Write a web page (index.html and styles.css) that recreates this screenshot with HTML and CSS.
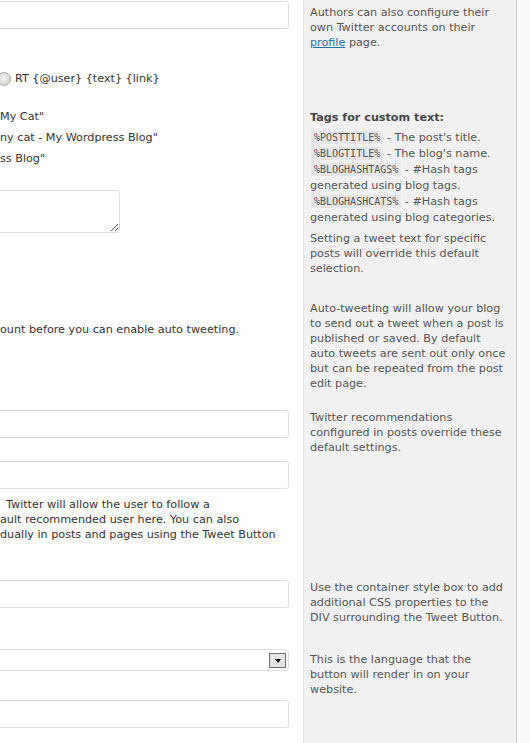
FILE: index.html
```html
<!DOCTYPE html>
<html>
<head>
<meta charset="utf-8">
<link rel="stylesheet" href="styles.css">
</head>
<body>
<div class="settings">
  <div class="main r1">
    <input class="text" type="text">
    <div class="radio-row"><span class="radio"></span><span class="radio-label">RT {@user} {text} {link}</span></div>
  </div>
  <div class="help r1">
    <p>Authors can also configure their own Twitter accounts on their <a href="#">profile</a> page.</p>
  </div>

  <div class="main r2">
    <ul class="examples">
      <li>My Cat"</li>
      <li>ny cat - My Wordpress Blog"</li>
      <li>ss Blog"</li>
    </ul>
    <textarea class="area"></textarea>
  </div>
  <div class="help r2">
    <h4>Tags for custom text:</h4>
    <p class="tags"><code>%POSTTITLE%</code> - The post's title.<br><code>%BLOGTITLE%</code> - The blog's name.<br><code>%BLOGHASHTAGS%</code> - #Hash tags generated using blog tags.<br><code>%BLOGHASHCATS%</code> - #Hash tags generated using blog categories.</p>
    <p class="after">Setting a tweet text for specific posts will override this default selection.</p>
  </div>

  <div class="main r3">
    <p class="note">ount before you can enable auto tweeting.</p>
  </div>
  <div class="help r3">
    <p>Auto-tweeting will allow your blog to send out a tweet when a post is published or saved. By default auto tweets are sent out only once but can be repeated from the post edit page.</p>
  </div>

  <div class="main r4">
    <input class="text" type="text">
    <input class="text second" type="text">
    <p class="desc"><span class="first">Twitter will allow the user to follow a</span><br>ault recommended user here. You can also<br>dually in posts and pages using the Tweet Button</p>
  </div>
  <div class="help r4">
    <p>Twitter recommendations configured in posts override these default settings.</p>
  </div>

  <div class="main r5">
    <input class="text" type="text">
  </div>
  <div class="help r5">
    <p>Use the container style box to add additional CSS properties to the DIV surrounding the Tweet Button.</p>
  </div>

  <div class="main r6">
    <div class="select"><span class="select-btn"><span class="caret"></span></span></div>
  </div>
  <div class="help r6">
    <p>This is the language that the button will render in on your website.</p>
  </div>

  <div class="main r7">
    <input class="text" type="text">
  </div>
  <div class="help r7"></div>
</div>
</body>
</html>
```

FILE: styles.css
```css
html, body {
  margin: 0;
  padding: 0;
  height: 100%;
  overflow: hidden;
}

body {
  background: #f9f9f9;
  font-family: "DejaVu Sans", Verdana, sans-serif;
  font-size: 11.2px;
  color: #333;
}

.settings {
  display: grid;
  grid-template-columns: 303px 214px 1fr;
  grid-template-rows: 100px 190px 112px 172px 68px 58px 1fr;
  min-height: 100vh;
}

.main {
  grid-column: 1;
  background: #fff;
  padding-right: 14px;
  display: flex;
  flex-direction: column;
  align-items: flex-start;
  overflow: hidden;
}

.help {
  grid-column: 2;
  background: #f1f1f1;
  border-left: 1px solid #e6e6e6;
  border-right: 1px solid #d2d2d2;
  padding: 10px 8.5px 0 6px;
  color: #555;
  line-height: 15px;
}

.help p {
  margin: 0;
}

.help a {
  color: #21759b;
  text-decoration: underline;
}

.help.r1 { padding-top: 5px; }
.help.r3 { padding-top: 11px; }
.help.r6 { padding-top: 10px; }

.help h4 {
  margin: 0 0 5px;
  font-size: 11.2px;
  font-weight: bold;
  line-height: 15px;
  color: #464646;
}

.help .tags {
  line-height: 16px;
}

.help code {
  display: inline-block;
  font-family: "DejaVu Sans Mono", "Liberation Mono", monospace;
  font-size: 10px;
  line-height: 13px;
  background: #e6e6e6;
  padding: 0 3px;
  margin: 0 0 0 1px;
  color: #555;
}

.help .after {
  margin-top: 5px;
}

.text {
  box-sizing: border-box;
  display: block;
  height: 28px;
  width: calc(100% + 12px);
  margin: 0 0 0 -12px;
  border: 1px solid #dfdfdf;
  border-radius: 3px;
  background: #fff;
  padding: 3px;
  font: inherit;
}

.r1 .text { margin-top: 1px; }

.radio-row {
  display: flex;
  align-items: center;
  margin-top: 42px;
  line-height: 15px;
}

.radio {
  width: 12px;
  height: 12px;
  border-radius: 50%;
  border: 1px solid #a9a9a9;
  background: radial-gradient(circle at 45% 40%, #f4f4f4 0%, #dcdcdc 60%, #c8c8c8 100%);
  margin-left: -3px;
  margin-right: 4px;
}

.examples {
  list-style: none;
  margin: 6px 0 0;
  padding: 0;
  line-height: 21px;
}

.area {
  display: block;
  box-sizing: border-box;
  margin: 21px 0 0 -12px;
  width: 132px;
  height: 43px;
  border: 1px solid #dfdfdf;
  border-radius: 3px;
  background: #fff;
}

.note {
  margin: 32px 0 0;
  line-height: 15px;
}

.r4 { padding-top: 8px; }
.r4 .second { margin-top: 23px; }

.desc {
  margin: 8px 0 0;
  line-height: 15px;
}

.desc .first {
  padding-left: 6px;
}

.r5 { padding-top: 6px; }
.r6 { padding-top: 7px; }

.select {
  box-sizing: border-box;
  width: calc(100% + 12px);
  margin-left: -12px;
  height: 22px;
  border: 1px solid #dfdfdf;
  border-radius: 3px;
  background: #fff;
  display: flex;
  justify-content: flex-end;
  align-items: center;
  padding-right: 2px;
}

.select-btn {
  box-sizing: border-box;
  width: 17px;
  height: 15px;
  border: 1px solid #6f6f6f;
  background: #e4e4e4;
  display: flex;
  align-items: center;
  justify-content: center;
}

.caret {
  width: 0;
  height: 0;
  border-left: 3.5px solid transparent;
  border-right: 3.5px solid transparent;
  border-top: 4px solid #000;
  margin-top: 2px;
}
```
